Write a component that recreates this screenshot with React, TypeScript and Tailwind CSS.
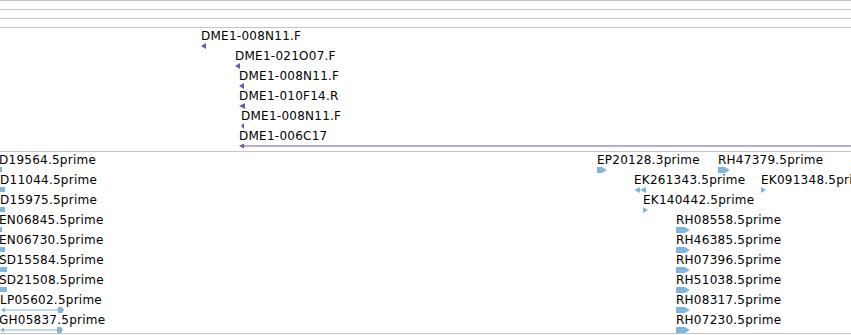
import React from "react";

type Glyph =
  | { kind: "left"; w: number }
  | { kind: "leftLine"; to: number }
  | { kind: "block"; w: number }
  | { kind: "arrow"; w: number }
  | { kind: "tri"; w: number }
  | { kind: "double"; w: number }
  | { kind: "span"; w: number };

interface Feature {
  label: string;
  x: number;
  row: number;
  glyph: Glyph;
}

const PURPLE = "#7157ad";
const BLUE = "#80b6de";

const estTrack: Feature[] = [
  { label: "DME1-008N11.F", x: 201, row: 0, glyph: { kind: "left", w: 5 } },
  { label: "DME1-021O07.F", x: 235, row: 1, glyph: { kind: "left", w: 5 } },
  { label: "DME1-008N11.F", x: 239, row: 2, glyph: { kind: "left", w: 5 } },
  { label: "DME1-010F14.R", x: 239, row: 3, glyph: { kind: "left", w: 6 } },
  { label: "DME1-008N11.F", x: 241, row: 4, glyph: { kind: "left", w: 3 } },
  { label: "DME1-006C17", x: 239, row: 5, glyph: { kind: "leftLine", to: 851 } },
];

const cdnaTrack: Feature[] = [
  { label: "D19564.5prime", x: -1, row: 0, glyph: { kind: "block", w: 3 } },
  { label: "D11044.5prime", x: 0, row: 1, glyph: { kind: "block", w: 5 } },
  { label: "D15975.5prime", x: 0, row: 2, glyph: { kind: "block", w: 5 } },
  { label: "EN06845.5prime", x: -1, row: 3, glyph: { kind: "block", w: 3 } },
  { label: "EN06730.5prime", x: -1, row: 4, glyph: { kind: "block", w: 6 } },
  { label: "SD15584.5prime", x: -1, row: 5, glyph: { kind: "block", w: 8 } },
  { label: "SD21508.5prime", x: -1, row: 6, glyph: { kind: "block", w: 8 } },
  { label: "LP05602.5prime", x: 0, row: 7, glyph: { kind: "span", w: 64 } },
  { label: "GH05837.5prime", x: -1, row: 8, glyph: { kind: "span", w: 64 } },
  { label: "EP20128.3prime", x: 597, row: 0, glyph: { kind: "arrow", w: 10 } },
  { label: "RH47379.5prime", x: 718, row: 0, glyph: { kind: "arrow", w: 12 } },
  { label: "EK261343.5prime", x: 634, row: 1, glyph: { kind: "double", w: 12 } },
  { label: "EK091348.5prime", x: 761, row: 1, glyph: { kind: "tri", w: 5 } },
  { label: "EK140442.5prime", x: 643, row: 2, glyph: { kind: "tri", w: 5 } },
  { label: "RH08558.5prime", x: 676, row: 3, glyph: { kind: "arrow", w: 14 } },
  { label: "RH46385.5prime", x: 676, row: 4, glyph: { kind: "arrow", w: 14 } },
  { label: "RH07396.5prime", x: 676, row: 5, glyph: { kind: "arrow", w: 14 } },
  { label: "RH51038.5prime", x: 676, row: 6, glyph: { kind: "arrow", w: 14 } },
  { label: "RH08317.5prime", x: 676, row: 7, glyph: { kind: "arrow", w: 14 } },
  { label: "RH07230.5prime", x: 676, row: 8, glyph: { kind: "arrow", w: 14 } },
];

function GlyphShape({ g, x }: { g: Glyph; x: number }) {
  switch (g.kind) {
    case "left":
      return (
        <svg width={g.w} height={6} className="block">
          <polygon points={`0,3 ${g.w},0 ${g.w},6`} fill={PURPLE} />
        </svg>
      );
    case "leftLine": {
      const w = g.to - x;
      return (
        <svg width={w} height={6} className="block">
          <polygon points="0,3 5,0.5 5,5.5" fill={PURPLE} />
          <rect x={4} y={2.5} width={w - 4} height={1} fill={PURPLE} />
        </svg>
      );
    }
    case "block":
      return <div className="h-[5px] bg-[#80b6de]" style={{ width: g.w }} />;
    case "arrow":
      return (
        <svg width={g.w} height={6} className="block">
          <polygon points={`0,0 ${g.w - 5},0 ${g.w},3 ${g.w - 5},6 0,6`} fill={BLUE} />
        </svg>
      );
    case "tri":
      return (
        <svg width={g.w} height={6} className="block">
          <polygon points={`0,0 ${g.w},3 0,6`} fill={BLUE} />
        </svg>
      );
    case "double":
      return (
        <svg width={g.w} height={6} className="block">
          <polygon points="0,3 6,0 6,6" fill={BLUE} />
          <polygon points="6,3 12,0 12,6" fill={BLUE} />
        </svg>
      );
    case "span":
      return (
        <svg width={g.w} height={6} className="block">
          <polygon points="1,3 5,0.5 5,5.5" fill={BLUE} />
          <rect x={4} y={2.5} width={g.w - 9} height={1} fill={BLUE} />
          <polygon points={`${g.w - 6},0 ${g.w - 2},0 ${g.w},3 ${g.w - 2},6 ${g.w - 6},6`} fill={BLUE} />
        </svg>
      );
  }
}

function FeatureItem({ f }: { f: Feature }) {
  return (
    <div className="absolute" style={{ left: f.x, top: f.row * 20 + 1 }}>
      <div className="text-[12px] leading-[14px] tracking-[0.25px] text-black whitespace-nowrap">
        {f.label}
      </div>
      <GlyphShape g={f.glyph} x={f.x} />
    </div>
  );
}

export default function App() {
  return (
    <div
      className="w-[851px] h-[335px] overflow-hidden bg-white"
      style={{ fontFamily: '"DejaVu Sans", sans-serif' }}
    >
      <div className="h-[9px] border-t border-[#c4c4c4]" />
      <div className="h-[9px] border-t border-[#c4c4c4]" />
      <div className="h-[9px] border-t border-[#c4c4c4]" />
      <div className="relative h-[124px] border-t border-[#c4c4c4] overflow-hidden">
        {estTrack.map((f, i) => (
          <FeatureItem key={i} f={f} />
        ))}
      </div>
      <div className="relative h-[183px] border-y border-[#c4c4c4] overflow-hidden">
        {cdnaTrack.map((f, i) => (
          <FeatureItem key={i} f={f} />
        ))}
      </div>
    </div>
  );
}
